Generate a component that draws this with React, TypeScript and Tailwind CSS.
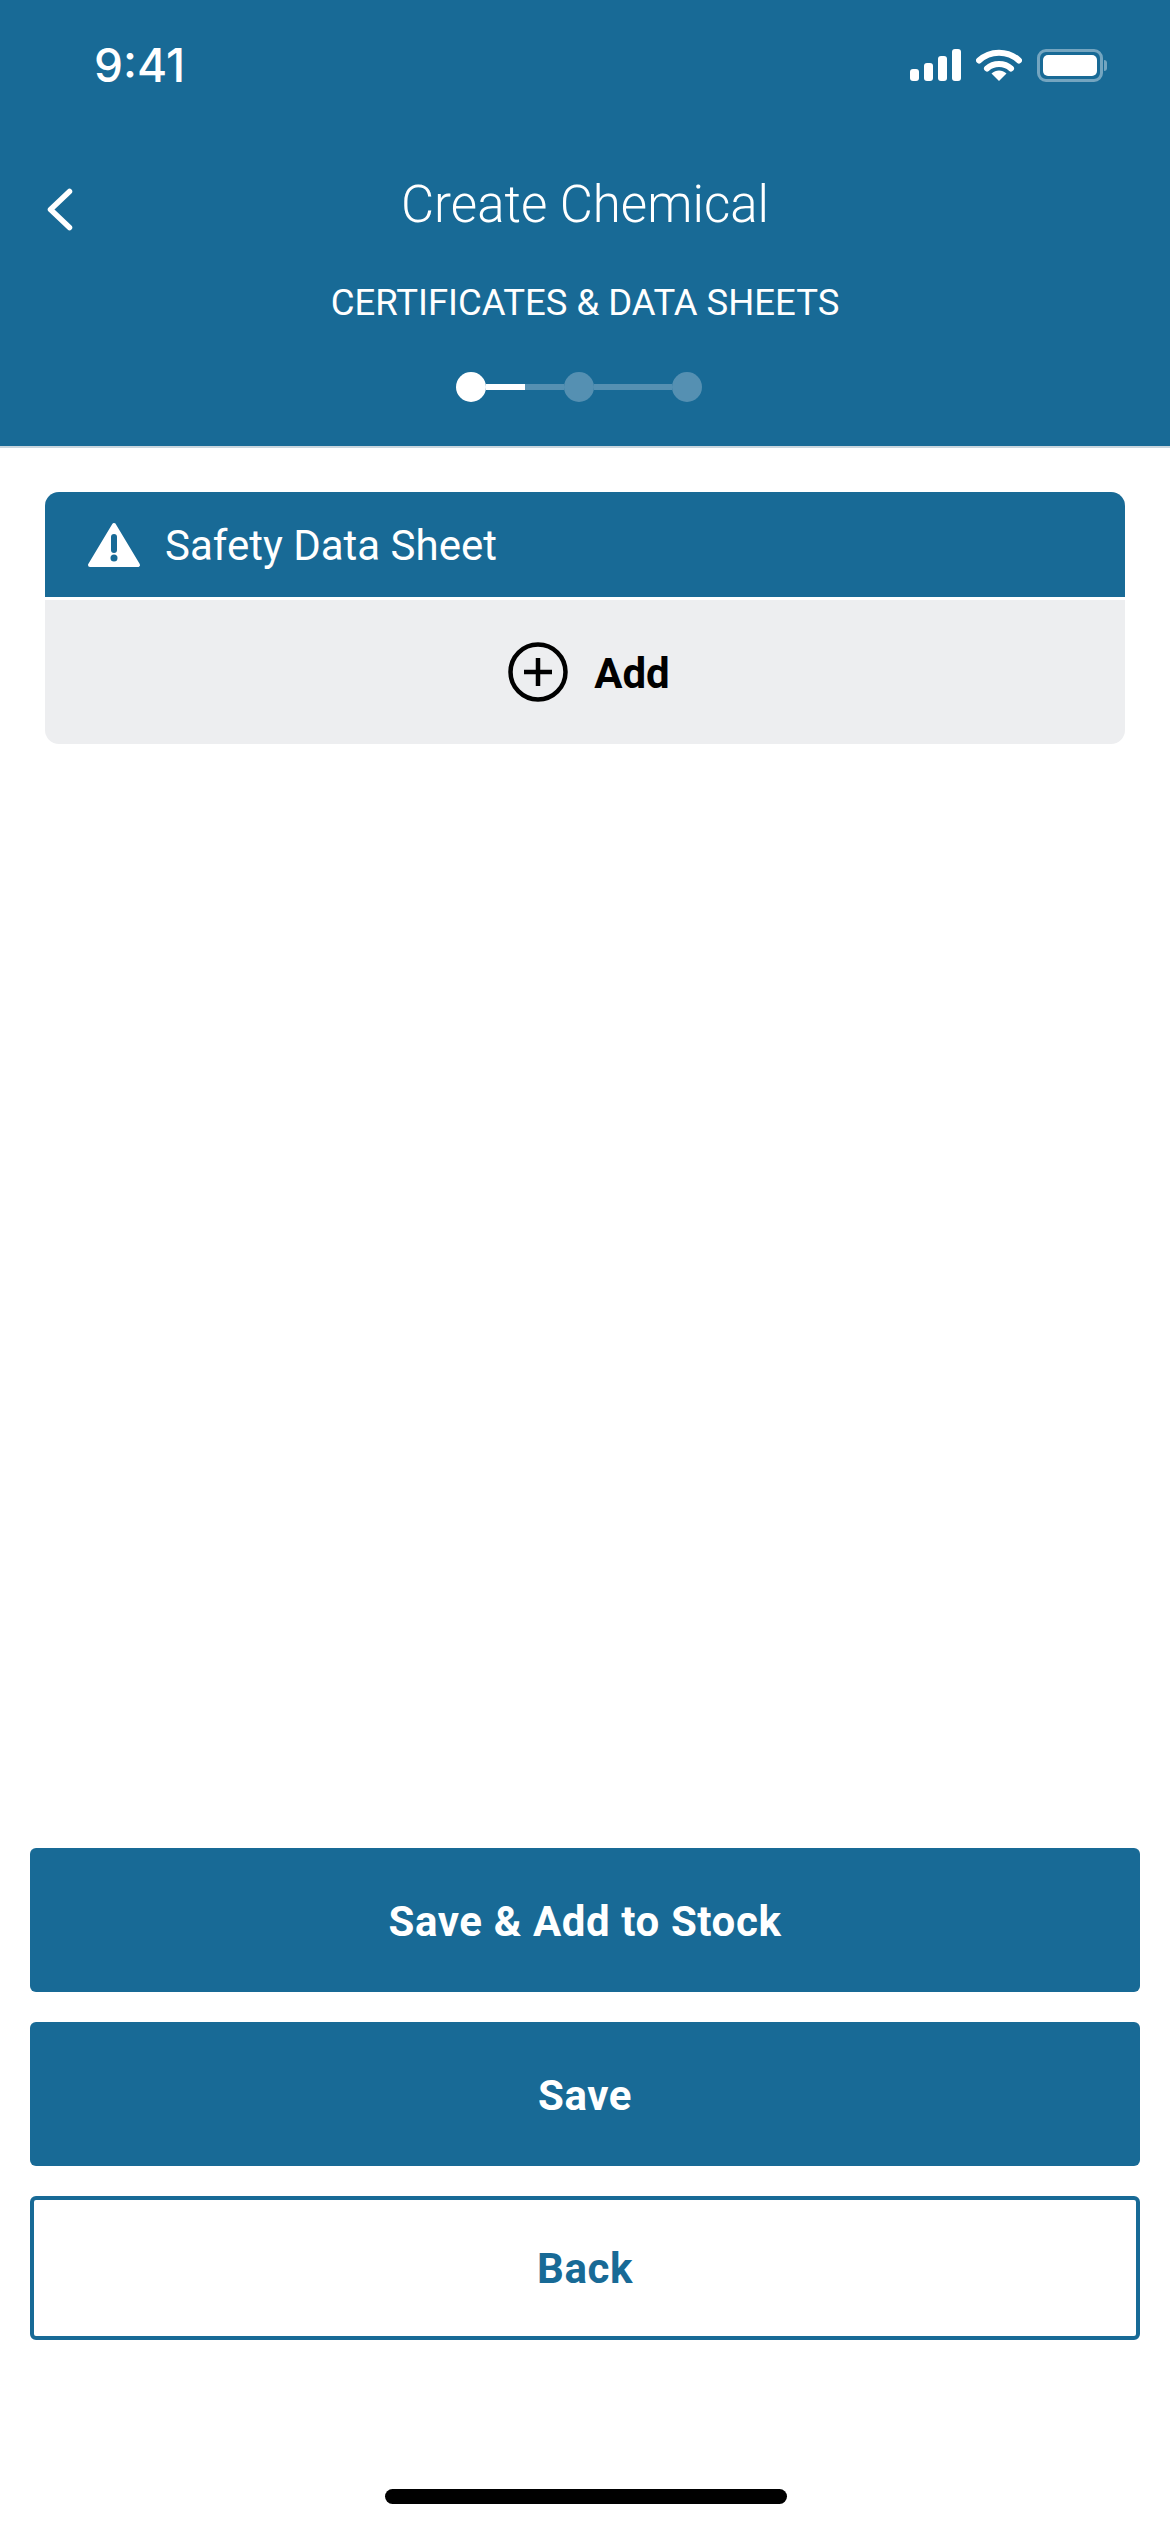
const StatusIcons = () => (
  <div className="flex items-center">
    <svg width="54" height="32" viewBox="0 0 54 32" fill="#fff">
      <rect x="0" y="20" width="9" height="12" rx="3" />
      <rect x="14" y="14" width="9" height="18" rx="3" />
      <rect x="28" y="7" width="9" height="25" rx="3" />
      <rect x="42" y="0" width="9" height="32" rx="3" />
    </svg>
    <svg className="ml-[12px]" width="46" height="32" viewBox="0 0 46 32" fill="none">
      <path d="M3 11.5C14 1 32 1 43 11.5" stroke="#fff" strokeWidth="6" strokeLinecap="round" />
      <path d="M11 19.5C17.5 13.5 28.5 13.5 35 19.5" stroke="#fff" strokeWidth="6" strokeLinecap="round" />
      <path d="M15.5 24.5C20 20.5 26 20.5 30.5 24.5L23 32Z" fill="#fff" />
    </svg>
    <div className="ml-[15px] flex items-center">
      <div className="h-[33px] w-[66px] rounded-[9px] border-[3px] border-white/40 p-[3px]">
        <div className="h-full w-full rounded-[5px] bg-white" />
      </div>
      <div className="ml-[1px] h-[11px] w-[3px] rounded-r-full bg-white/40" />
    </div>
  </div>
);

const Stepper = () => (
  <div className="mt-[49px] flex items-center justify-center pr-[12px]">
    <div className="h-[30px] w-[30px] rounded-full bg-white" />
    <div className="h-[6px] w-[39px] bg-white" />
    <div className="h-[6px] w-[39px] bg-[#5590b2]" />
    <div className="h-[30px] w-[30px] rounded-full bg-[#5590b2]" />
    <div className="h-[6px] w-[78px] bg-[#5590b2]" />
    <div className="h-[30px] w-[30px] rounded-full bg-[#5590b2]" />
  </div>
);

const PrimaryButton = ({ label }: { label: string }) => (
  <button className="flex h-[144px] w-full items-center justify-center rounded-[6px] bg-[#186a96] pt-[2px] text-[42px] font-bold tracking-[0.6px] text-white">
    {label}
  </button>
);

export default function App() {
  return (
    <div className="flex h-[2532px] w-[1170px] flex-col bg-white font-['Roboto',sans-serif]">
      <header className="h-[448px] border-b-[2px] border-[#c9d6de] bg-[#186a96] text-white">
        <div className="flex h-[130px] items-center justify-between pl-[94px] pr-[63px]">
          <span className="font-['Inter',sans-serif] text-[46px] font-medium">9:41</span>
          <StatusIcons />
        </div>
        <div className="relative flex justify-center pt-[43px]">
          <svg className="absolute left-[44px] top-[55px]" width="32" height="50" viewBox="0 0 32 50" fill="none">
            <path d="M25.5 6.5L6.5 24.5L25.5 42.5" stroke="#fff" strokeWidth="5.5" strokeLinecap="round" strokeLinejoin="round" />
          </svg>
          <h1 className="text-[51px] font-light leading-[64px]">Create Chemical</h1>
        </div>
        <p className="mt-[46px] text-center text-[36.5px] leading-[40px]">CERTIFICATES &amp; DATA SHEETS</p>
        <Stepper />
      </header>

      <main className="flex-1 px-[45px] pt-[44px]">
        <section className="overflow-hidden rounded-[14px] bg-[#edeef0]">
          <div className="box-content flex h-[105px] items-center border-b-[3px] border-white bg-[#186a96] pl-[42px] text-white">
            <svg width="54" height="46" viewBox="0 0 54 46" fill="none">
              <path d="M27 3L51 43H3Z" fill="#fff" stroke="#fff" strokeWidth="4" strokeLinejoin="round" />
              <path d="M27 15V28" stroke="#186a96" strokeWidth="6" strokeLinecap="round" />
              <circle cx="27" cy="36" r="3.5" fill="#186a96" />
            </svg>
            <span className="ml-[24px] pt-[2px] text-[42px]">Safety Data Sheet</span>
          </div>
          <div className="flex h-[144px] items-center justify-center pl-[8px]">
            <svg width="60" height="60" viewBox="0 0 60 60" fill="none">
              <circle cx="30" cy="30" r="27.5" stroke="#000" strokeWidth="4.5" />
              <path d="M30 16V44M16 30H44" stroke="#000" strokeWidth="4.5" />
            </svg>
            <span className="ml-[26px] pt-[2px] text-[42px] font-bold text-black">Add</span>
          </div>
        </section>
      </main>

      <div className="flex flex-col gap-[30px] px-[30px]">
        <PrimaryButton label="Save & Add to Stock" />
        <PrimaryButton label="Save" />
        <button className="flex h-[144px] w-full items-center justify-center rounded-[6px] border-[4px] border-[#186a96] bg-white text-[42px] font-bold tracking-[0.6px] text-[#186a96]">
          Back
        </button>
      </div>

      <div className="flex h-[192px] items-start justify-center pl-[2px] pt-[149px]">
        <div className="h-[15px] w-[402px] rounded-full bg-black" />
      </div>
    </div>
  );
}
